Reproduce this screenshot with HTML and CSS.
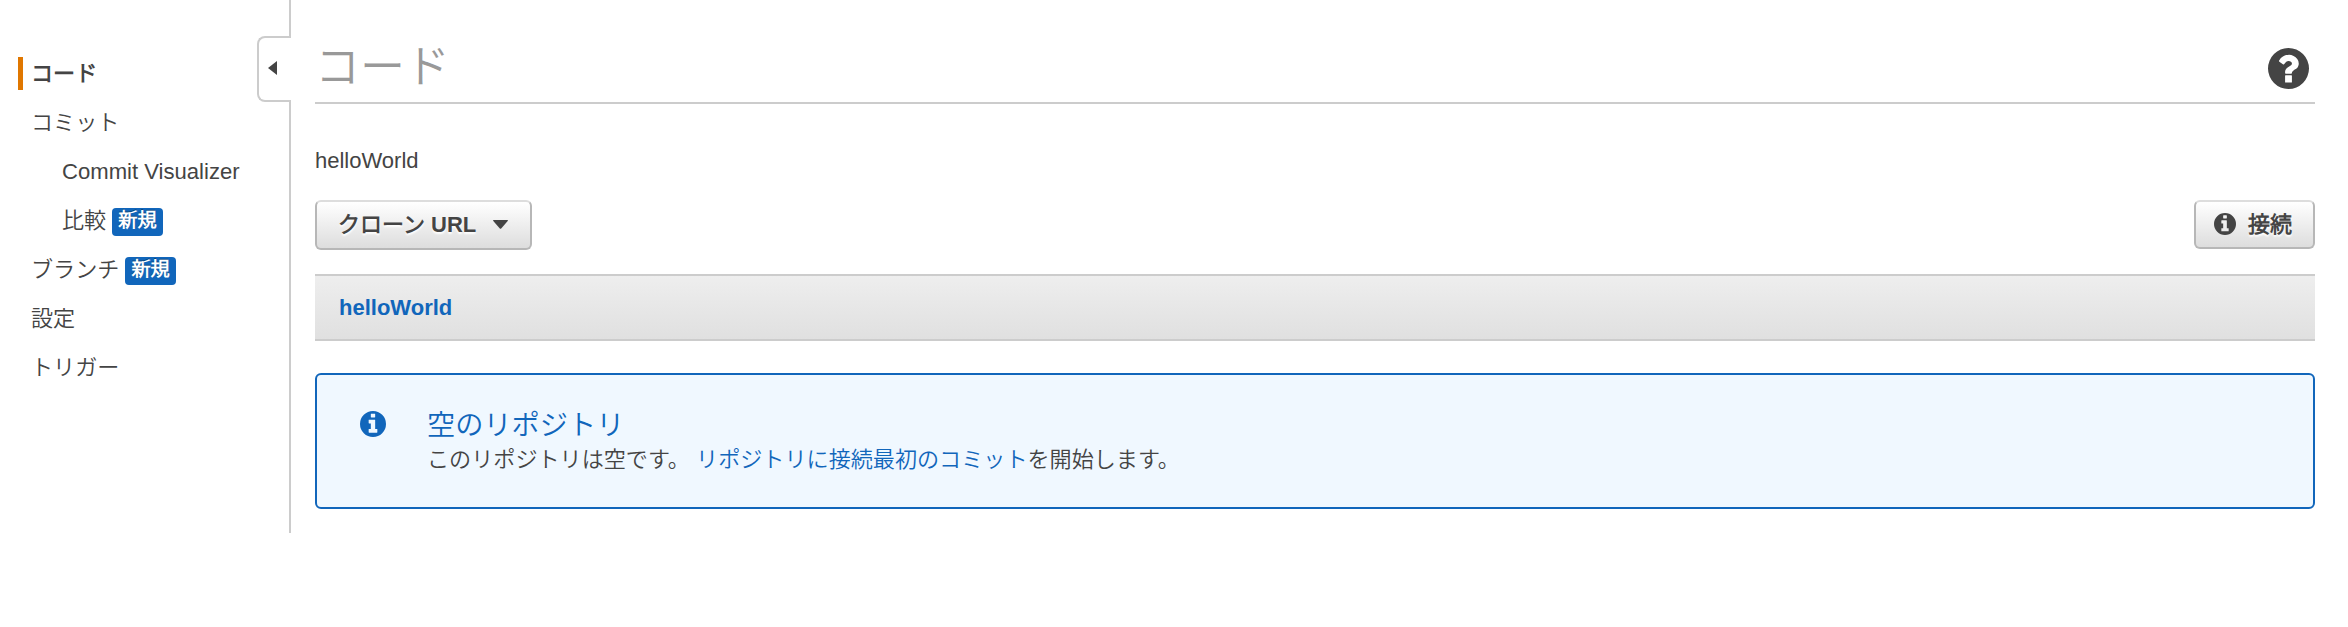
FILE: index.html
```html
<!DOCTYPE html>
<html lang="ja">
<head>
<meta charset="utf-8">
<title>コード</title>
<link rel="stylesheet" href="styles.css">
</head>
<body>
<svg class="defs" width="0" height="0">
  <symbol id="info" viewBox="0 0 1536 1536">
    <path fill-rule="evenodd" d="M768 0a768 768 0 1 1 0 1536a768 768 0 1 1 0-1536zM1024 1248v-160q0-14-9-23t-23-9h-96V544q0-14-9-23t-23-9H544q-14 0-23 9t-9 23v160q0 14 9 23t23 9h96v320h-96q-14 0-23 9t-9 23v160q0 14 9 23t23 9h448q14 0 23-9t9-23zM896 352V192q0-14-9-23t-23-9H672q-14 0-23 9t-9 23v160q0 14 9 23t23 9h192q14 0 23-9t9-23z"/>
  </symbol>
  <symbol id="help" viewBox="0 0 1536 1536">
    <path fill-rule="evenodd" d="M768 0a768 768 0 1 1 0 1536a768 768 0 1 1 0-1536zM896 1280v-240q0-16-16-16H656q-16 0-16 16v240q0 16 16 16h224q16 0 16-16zM1152 576q0-88-55.500-163T958 297t-170-41q-243 0-371 213q-15 24 8 42l132 100q7 6 19 6q16 0 25-12q53-68 86-92q34-24 86-24q48 0 85.500 26t37.500 59q0 38-20 61t-68 45q-63 28-115.500 86.500T640 892v36q0 14 9 23t23 9h192q14 0 23-9t9-23q0-19 21.500-49.500T972 829q32-18 49-28.500t46-35t44.500-48t28-60.500t12.500-81z"/>
  </symbol>
</svg>
<div class="layout">
  <nav class="sidebar">
    <ul class="nav">
      <li class="nav-item active">コード</li>
      <li class="nav-item">コミット</li>
      <li class="nav-item sub">Commit Visualizer</li>
      <li class="nav-item sub">比較<span class="badge">新規</span></li>
      <li class="nav-item">ブランチ<span class="badge">新規</span></li>
      <li class="nav-item">設定</li>
      <li class="nav-item">トリガー</li>
    </ul>
    <div class="rail">
      <div class="rail-top"></div>
      <div class="toggle"><svg width="9" height="14" viewBox="0 0 9 14"><path d="M9 0v14L0 7z"/></svg></div>
      <div class="rail-bottom"></div>
    </div>
  </nav>
  <main class="main">
    <header class="header">
      <h1 class="title">コード</h1>
      <svg class="help"><use href="#help"/></svg>
    </header>
    <p class="repo">helloWorld</p>
    <div class="toolbar">
      <button class="btn clone"><span>クローン URL</span><svg width="15" height="9" viewBox="0 0 15 9"><path d="M.5 0h14q.7.300.2 1L8.200 8.400q-.7.600-1.400 0L.3 1Q-.2.300.5 0z"/></svg></button>
      <button class="btn connect"><svg width="22" height="22"><use href="#info"/></svg><span>接続</span></button>
    </div>
    <div class="crumbs">helloWorld</div>
    <section class="alert">
      <svg class="alert-icon"><use href="#info"/></svg>
      <div>
        <h2 class="alert-title">空のリポジトリ</h2>
        <p class="alert-text">このリポジトリは空です。 <a class="link">リポジトリに接続最初のコミット</a>を開始します。</p>
      </div>
    </section>
  </main>
</div>
</body>
</html>
```
FILE: styles.css
```css
* { box-sizing: border-box; }
body {
  margin: 0;
  background: #fff;
  color: #444;
  font: 22px/33px "Liberation Sans", "Noto Sans CJK JP DemiLight", "Noto Sans CJK JP", sans-serif;
  font-weight: 350;
}
h1, h2, p, ul { margin: 0; padding: 0; font-weight: 350; }
svg { display: block; fill: #444; }
.defs { position: absolute; }
.layout { display: flex; }
.sidebar { display: flex; width: 291px; height: 533px; }
.nav {
  flex: 1;
  list-style: none;
  padding: 57px 0 0 18px;
  display: flex;
  flex-direction: column;
  gap: 16px;
}
.nav-item {
  display: flex;
  align-items: center;
  height: 33px;
  padding: 0 0 1px 13px;
  font-size: 22.1px;
  white-space: nowrap;
}
.nav-item.active { border-left: 5px solid #e07700; padding-left: 8px; font-weight: 700; }
.nav-item.sub { padding-left: 44px; }
.badge {
  margin: 3px 0 0 6px;
  padding: 0 6px;
  height: 28px;
  line-height: 26px;
  font-size: 19.200px;
  font-weight: 700;
  color: #fff;
  background: #1166bb;
  border-radius: 4px;
  text-shadow: 0 -1px 0 rgba(0, 0, 0, .35);
}
.rail { width: 34px; display: flex; flex-direction: column; align-items: flex-end; }
.rail-top, .rail-bottom { width: 2px; background: #ccc; }
.rail-top { height: 36px; }
.rail-bottom { flex: 1; }
.toggle {
  width: 34px;
  height: 66px;
  border: 2px solid #ccc;
  border-right: 0;
  border-radius: 8px 0 0 8px;
  padding: 23px 0 0 9px;
}
.main { flex: 1; padding: 0 33px 0 24px; }
.header {
  display: flex;
  justify-content: space-between;
  height: 104px;
  border-bottom: 2px solid #ccc;
  padding: 38px 6px 0 0;
}
.title { font-size: 45px; line-height: 60px; font-weight: 400; color: #999; }
.help { width: 41px; height: 41px; margin-top: 10px; }
.repo { margin-top: 40px; height: 56px; }
.toolbar { display: flex; justify-content: space-between; height: 50px; }
.btn {
  display: flex;
  align-items: center;
  height: 50px;
  border: 2px solid #b7b7b7;
  border-top-color: #ddd;
  border-radius: 6px;
  background: linear-gradient(#fff, #ddd);
  color: #444;
  font: inherit;
  font-weight: 700;
  text-shadow: 0 2px 2px #fff;
}
.clone { width: 217px; padding: 0 22px 2px 21px; justify-content: space-between; }
.connect { width: 121px; height: 49px; padding: 0 0 1px 18px; gap: 12px; }
.crumbs {
  margin-top: 24px;
  height: 67px;
  padding-left: 24px;
  line-height: 63px;
  border-top: 2px solid #ccc;
  border-bottom: 2px solid #ccc;
  background: linear-gradient(#eee, #e0e0e0);
  color: #1166bb;
  font-weight: 700;
}
.alert {
  display: flex;
  gap: 41px;
  margin-top: 32px;
  height: 136px;
  padding: 32px 43px;
  border: 2px solid #1166bb;
  border-radius: 6px;
  background: #f0f8ff;
}
.alert-icon { width: 26px; height: 26px; margin-top: 4px; fill: #1166bb; }
.alert-title { font-size: 28.200px; line-height: 36px; font-weight: 400; color: #1166bb; }
.alert-text { font-size: 22.100px; white-space: nowrap; }
.link { color: #1166bb; }
```
